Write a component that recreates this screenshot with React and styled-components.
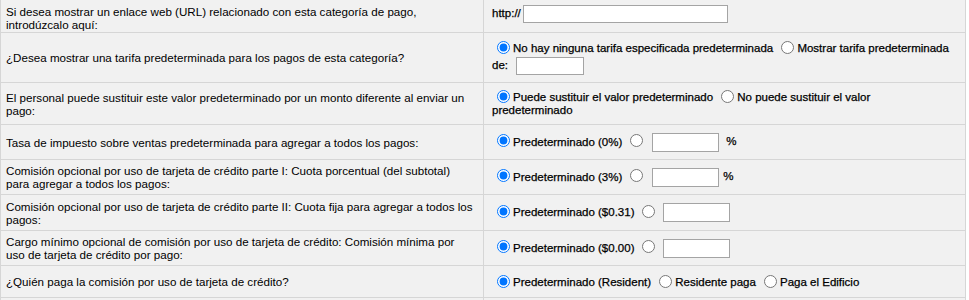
import React from "react";
import styled, { createGlobalStyle } from "styled-components";

const Global = createGlobalStyle`
  html, body { margin: 0; padding: 0; background: #ffffff; }
  body { font-family: "Liberation Sans", Arial, sans-serif; color: #000; }
`;

const Sheet = styled.div`
  width: 964px;
  border-left: 1px solid #d6d6d6;
  border-right: 1px solid #d6d6d6;
  background: #f1f1f1;
  font-size: 11.5px;
  line-height: 13px;
`;

const Row = styled.div`
  display: grid;
  grid-template-columns: 483px 1fr;
  min-height: ${(p) => p.$h}px;
  border-bottom: 1px solid #d6d6d6;
`;

const Label = styled.div`
  display: flex;
  align-items: ${(p) => (p.$bottom ? "flex-end" : "center")};
  padding: 0 9px ${(p) => (p.$bottom ? 1 : 0)}px 5px;
  border-right: 1px solid #d6d6d6;
  font-size: 11.62px;
`;

const Field = styled.div`
  display: flex;
  align-items: center;
  padding: 0 14px ${(p) => p.$pb || 0}px 8px;
  -webkit-text-stroke: 0.25px #000;
`;

const Flow = styled.div`
  line-height: ${(p) => p.$lh || 13}px;
`;

const Radio = styled.input.attrs({ type: "radio" })`
  width: 13px;
  height: 13px;
  margin: 0 ${(p) => p.$r ?? 3}px 0 ${(p) => p.$l ?? 5}px;
  vertical-align: -2px;
`;

const Text = styled.span`
  margin-right: ${(p) => p.$r || 0}px;
`;

const Box = styled.input.attrs({ type: "text" })`
  box-sizing: border-box;
  width: ${(p) => p.$w}px;
  height: ${(p) => p.$hh || 19}px;
  margin: 0 ${(p) => p.$r || 0}px 0 ${(p) => p.$l || 0}px;
  border: 1px solid #a4a4a4;
  background: #fff;
  vertical-align: middle;
  padding: 0 3px;
  font: inherit;
  -webkit-text-stroke: 0;
`;

const Unit = styled.span`
  margin-left: ${(p) => p.$l}px;
`;

export default function App() {
  return (
    <>
      <Global />
      <Sheet>
        <Row $h={32}>
          <Label $bottom>Si desea mostrar un enlace web (URL) relacionado con esta categoría de pago, introdúzcalo aquí:</Label>
          <Field $pb={4}>
            <Flow>
              <Text $r={2}>http://</Text>
              <Box $w={205} $hh={18} />
            </Flow>
          </Field>
        </Row>
        <Row $h={49}>
          <Label>¿Desea mostrar una tarifa predeterminada para los pagos de esta categoría?</Label>
          <Field>
            <Flow $lh={17}>
              <Radio name="tarifa" defaultChecked />
              <Text>No hay ninguna tarifa especificada predeterminada </Text>
              <Radio name="tarifa" />
              <Text>Mostrar tarifa predeterminada de: </Text>
              <Box $w={68} $hh={18} $l={5} />
            </Flow>
          </Field>
        </Row>
        <Row $h={41}>
          <Label>El personal puede sustituir este valor predeterminado por un monto diferente al enviar un pago:</Label>
          <Field>
            <Flow>
              <Radio name="sust" defaultChecked />
              <Text>Puede sustituir el valor predeterminado </Text>
              <Radio name="sust" />
              <Text>No puede sustituir el valor predeterminado</Text>
            </Flow>
          </Field>
        </Row>
        <Row $h={34}>
          <Label>Tasa de impuesto sobre ventas predeterminada para agregar a todos los pagos:</Label>
          <Field>
            <Flow>
              <Radio name="tasa" defaultChecked />
              <Text>Predeterminado (0%)</Text>
              <Radio name="tasa" $l={8} />
              <Box $w={67} $l={6} />
              <Unit $l={7}>%</Unit>
            </Flow>
          </Field>
        </Row>
        <Row $h={34}>
          <Label>Comisión opcional por uso de tarjeta de crédito parte I: Cuota porcentual (del subtotal) para{"\u00a0"}agregar a todos los pagos:</Label>
          <Field>
            <Flow>
              <Radio name="pct" defaultChecked />
              <Text>Predeterminado (3%)</Text>
              <Radio name="pct" $l={8} />
              <Box $w={67} $l={6} />
              <Unit $l={4}>%</Unit>
            </Flow>
          </Field>
        </Row>
        <Row $h={35}>
          <Label>Comisión opcional por uso de tarjeta de crédito parte II: Cuota fija para agregar a todos los pagos:</Label>
          <Field>
            <Flow>
              <Radio name="fija" defaultChecked />
              <Text>Predeterminado ($0.31)</Text>
              <Radio name="fija" $l={8} />
              <Box $w={67} $l={5} />
            </Flow>
          </Field>
        </Row>
        <Row $h={34}>
          <Label>Cargo mínimo opcional de comisión por uso de tarjeta de crédito: Comisión mínima por uso{"\u00a0"}de tarjeta de crédito por pago:</Label>
          <Field>
            <Flow>
              <Radio name="min" defaultChecked />
              <Text>Predeterminado ($0.00)</Text>
              <Radio name="min" $l={8} />
              <Box $w={67} $l={5} />
            </Flow>
          </Field>
        </Row>
        <Row $h={31}>
          <Label>¿Quién paga la comisión por uso de tarjeta de crédito?</Label>
          <Field>
            <Flow>
              <Radio name="quien" defaultChecked />
              <Text>Predeterminado (Resident) </Text>
              <Radio name="quien" />
              <Text>Residente paga </Text>
              <Radio name="quien" />
              <Text>Paga el Edificio</Text>
            </Flow>
          </Field>
        </Row>
        <Row $h={31}>
          <Label />
          <Field />
        </Row>
      </Sheet>
    </>
  );
}
